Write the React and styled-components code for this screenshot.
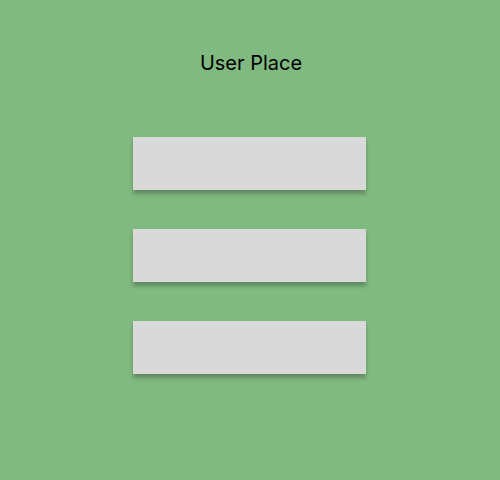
import React from "react";
import styled, { createGlobalStyle } from "styled-components";

const GlobalStyle = createGlobalStyle`
  body {
    margin: 0;
    font-family: Inter, "Liberation Sans", sans-serif;
  }
`;

const Screen = styled.div`
  width: 500px;
  height: 480px;
  background: #80ba80;
  box-sizing: border-box;
  padding-top: 51px;
  display: flex;
  flex-direction: column;
`;

const Title = styled.h1`
  margin: 0;
  font-size: 20px;
  line-height: 24px;
  font-weight: 400;
  color: #000;
  text-align: center;
  padding-left: 2px;
`;

const Slots = styled.div`
  margin-top: 62px;
  padding-left: 133px;
  display: flex;
  flex-direction: column;
  gap: 39px;
`;

const Slot = styled.div`
  width: 233px;
  height: 53px;
  background: #d9d9d9;
  box-shadow: 0 4px 4px rgba(0, 0, 0, 0.25);
`;

const App = () => (
  <>
    <GlobalStyle />
    <Screen>
      <Title>User Place</Title>
      <Slots>
        <Slot />
        <Slot />
        <Slot />
      </Slots>
    </Screen>
  </>
);

export default App;
